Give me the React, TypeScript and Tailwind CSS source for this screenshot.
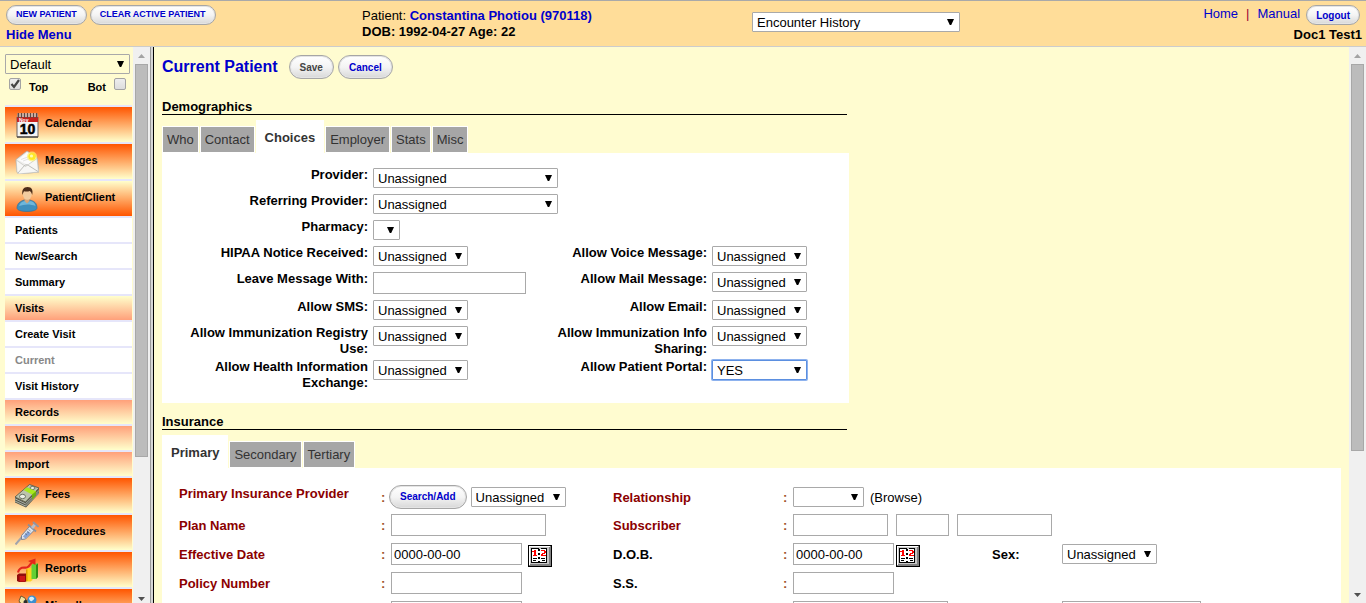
import React from 'react';
import clsx from 'clsx';

interface PickerProps {
  id: string;
  options: string[];
  className?: string;
  label?: string;
}

const Picker: React.FC<PickerProps> = ({ id, options, className, label }) => (
  <span className="relative inline-flex justify-self-start">
    <select
      id={id}
      aria-label={label}
      className={clsx(
        'h-5 appearance-none rounded-[1px] border pl-1 pr-4 pt-px text-[13px] leading-4 text-black outline-none',
        className
      )}
    >
      {options.map((option) => (
        <option key={option}>{option}</option>
      ))}
    </select>
    <svg className="pointer-events-none absolute right-1.5 top-[7px] h-1.5 w-[7px]" viewBox="0 0 7 6">
      <path d="M0 0h7L4.200 6H2.800z" fill="#000" />
    </svg>
  </span>
);

const plain = 'border-[#a9a9a9] bg-white';

const PillButton: React.FC<{ className?: string; children: React.ReactNode }> = ({ className, children }) => (
  <button
    type="button"
    className={clsx(
      'rounded-full border border-[#a6a6a6] bg-linear-to-b/srgb from-white via-[#f4f4f4] to-[#d8d8d8] font-bold whitespace-nowrap shadow-[inset_0_0_0_1px_#e4e4e4]',
      className
    )}
  >
    {children}
  </button>
);

const TextBox: React.FC<{ id: string; className?: string; label?: string; value?: string }> = ({
  id,
  className,
  label,
  value,
}) => (
  <input
    id={id}
    type="text"
    aria-label={label}
    defaultValue={value}
    className={clsx('h-[22px] border border-[#a9a9a9] bg-white px-0.5 text-[13px] leading-4 outline-none', className)}
  />
);

const Checkbox: React.FC<{ id: string; checked?: boolean }> = ({ id, checked }) => (
  <span className="relative inline-flex">
    <input
      id={id}
      type="checkbox"
      defaultChecked={checked}
      className="h-3 w-3 appearance-none rounded-xs border border-[#a3a3a3] bg-linear-to-b/srgb from-[#eeeeee] to-[#dddddd]"
    />
    {checked && (
      <svg className="pointer-events-none absolute left-0 top-0 h-3 w-3" viewBox="0 0 12 12">
        <path d="M2.5 6l2.5 3 5-7" fill="none" stroke="#444" strokeWidth="2.2" />
      </svg>
    )}
  </span>
);

/* menu icons */

const CalendarIcon = () => (
  <svg viewBox="0 0 24 26" className="h-[26px] w-6 shrink-0">
    <path d="M2 5h21v20H2z" fill="#f4f4f4" stroke="#6d6560" />
    <path d="M2 5h21v5H2z" fill="#c9201c" />
    <path d="M2 1.500h21V5H2z" fill="#b98f80" />
    <path d="M3.500 1v5M6.500 1v5M9.500 1v5M12.500 1v5M15.500 1v5M18.500 1v5M21.500 1v5" stroke="#5f4a44" strokeWidth="1.3" />
    <path d="M5 1v4M8 1v4M11 1v4M14 1v4M17 1v4M20 1v4" stroke="#e8dcd6" strokeWidth="0.9" />
    <text x="4" y="9.5" fontSize="5" fontWeight="bold" fill="#fff" fontFamily="Liberation Sans, sans-serif">
      Nov
    </text>
    <text
      x="12.5"
      y="22"
      fontSize="14"
      fontWeight="bold"
      textAnchor="middle"
      fill="#000"
      stroke="#000"
      strokeWidth="0.5"
      fontFamily="Liberation Sans, sans-serif"
    >
      10
    </text>
    <path d="M2 25h21" stroke="#55504c" strokeWidth="1.5" />
  </svg>
);

const MessagesIcon = () => (
  <svg viewBox="0 0 24 24" className="h-6 w-6 shrink-0">
    <path d="M1 9.500L12 1l10 6.500L24 22 3.500 24 2 22z" fill="#ededeb" stroke="#aaaaa6" strokeWidth="0.7" />
    <path d="M3 10L12 2.500 21 8l-8 7z" fill="#fcfcfc" />
    <path d="M6 9.500l8-3M8 11l8-3" stroke="#d0d0d0" strokeWidth="0.6" />
    <path d="M1.200 10l9.300 6.500L22 8.500 23.500 22 3.500 24 2 22z" fill="#f7f7f5" stroke="#bdbdb9" strokeWidth="0.6" />
    <path d="M3 23l6.500-7.500c1.500-1 3-1 4 0L23 21.500" fill="none" stroke="#aeaeaa" strokeWidth="0.8" />
    <circle cx="17" cy="6.500" r="5" fill="#fff36b" opacity="0.7" />
    <circle cx="17" cy="6.500" r="3.600" fill="#ffe926" />
    <circle cx="16.500" cy="6" r="1.600" fill="#fffbb0" />
  </svg>
);

const PatientIcon = () => (
  <svg viewBox="0 0 24 26" className="h-[26px] w-6 shrink-0">
    <path d="M2 22c0-5 4-7 7-8h6c4 1 7 3 7 8 0 2-4 3.500-10 3.500S2 24 2 22z" fill="#3f8fbd" stroke="#2b6f98" strokeWidth="0.6" />
    <path d="M4 20c1-3 3-4.500 6-5l2 2 3-2c3 .5 5 2 5.500 5-5-2-11-2-16.500 0z" fill="#6fb6da" />
    <path d="M9.500 11h5v4L12 17.500 9.500 15z" fill="#d9a577" />
    <ellipse cx="12.300" cy="8.500" rx="4.300" ry="5.200" fill="#f2cba0" />
    <path d="M7.500 9C6.500 4 8.500 1 12.500 1c4.500 0 5.800 3.500 4.700 8-.6-2-1.200-3.300-2.400-4-2 .8-4.300.6-5.800.3C8.200 6.500 8 7.500 7.500 9z" fill="#4c2d1a" />
  </svg>
);

const FeesIcon = () => (
  <svg viewBox="0 0 24 24" className="h-6 w-6 shrink-0">
    <path d="M0 13v5.500l11 5L24 9.500V4.500L10 18z" fill="#55594e" />
    <path d="M0 14.800l10.500 5L24 6.500M0 17l10.500 5L24 8.500" stroke="#c9ccbf" strokeWidth="0.8" fill="none" />
    <path d="M0 13L14.500.5 24 4 10.500 18z" fill="#bcc2ad" stroke="#4c5243" strokeWidth="0.8" />
    <ellipse cx="7.500" cy="12.500" rx="3" ry="2.200" fill="#eceee4" stroke="#5f6756" strokeWidth="0.9" />
    <ellipse cx="17.500" cy="4" rx="2.500" ry="1.500" fill="#eceee4" stroke="#5f6756" strokeWidth="0.9" />
    <path d="M8.500 6L12 3.200l9 4v4L17 15.500v-5z" fill="#a9e81e" />
    <path d="M17 10.500l4-3.300v4.300l-4 4z" fill="#6fae10" />
  </svg>
);

const SyringeIcon = () => (
  <svg viewBox="0 0 24 24" className="h-6 w-6 shrink-0">
    <path d="M.5 23.500L7 16" stroke="#9fa3ad" strokeWidth="2" />
    <path d="M6.500 14.500L15 5l4.500 4-9 9-4 .5z" fill="#dfe4ec" stroke="#737c8c" strokeWidth="0.9" />
    <path d="M8 15.500L13 10l3 2.500-5.500 5z" fill="#86a3d6" />
    <path d="M10 12.500l2 1.500M12 10.500l2 1.500M13.500 8.500l2 1.500" stroke="#5f6878" strokeWidth="0.7" />
    <path d="M13 3.500l8 7" stroke="#8a909c" strokeWidth="1.800" />
    <path d="M17 7l3-3.500" stroke="#b9bdc7" strokeWidth="3" />
    <path d="M18 1l5.500 4.800" stroke="#8f95a2" strokeWidth="2" />
  </svg>
);

const ReportsIcon = () => (
  <svg viewBox="0 0 24 24" className="h-6 w-6 shrink-0">
    <path d="M2 17l2-1.500h8v7.500l-2 1H4l-2-1z" fill="#8f0d0d" />
    <path d="M4.500 18H10v5.500H4.500z" fill="#d01818" />
    <path d="M11 11.500l2-1.500h4.500v12l-2 1.500H11z" fill="#ffd21c" />
    <path d="M11 11.500h1.500V23H11z" fill="#e0a000" />
    <path d="M16.500 7l2-1.500H23V19l-2 2h-4.500z" fill="#63cf35" />
    <path d="M21 7l2-1.500V19l-2 2z" fill="#2f8a12" />
    <path d="M3 14.500c1-4 4-5 6-5 2.500.5 3.500 0 4.500-1s2-2.500 3.500-4" fill="none" stroke="#e3261b" strokeWidth="2.200" />
    <path d="M13 3L20.500.5 20.500 7z" fill="#e3261b" />
  </svg>
);

const MiscIcon = () => (
  <svg viewBox="0 0 24 24" className="h-6 w-6 shrink-0">
    <path d="M2 9l10-4 11 4v11l-11 4-10-4z" fill="#d7a24a" stroke="#7b5518" strokeWidth="0.8" />
    <circle cx="17" cy="5" r="4.500" fill="#3b8fd0" />
    <path d="M14 3c2-2 4-1 5 0s-1 2-2 3-3-1-3-3z" fill="#d8ecf8" />
    <path d="M4 6l2-5 4 2 2 6-5 1z" fill="#f4e3a1" stroke="#4e4422" strokeWidth="0.8" />
    <circle cx="10.500" cy="7" r="2" fill="#2c2c2c" />
    <path d="M2 9l10 4 11-4" stroke="#7b5518" fill="none" />
  </svg>
);

const BookIcon = () => (
  <svg viewBox="0 0 24 22" className="h-[22px] w-6" shapeRendering="crispEdges">
    <path d="M0 0h24v22H0z" fill="#000" />
    <path d="M1 1h22v20H1z" fill="#808080" />
    <path d="M1 1h21v1H2v18H1z" fill="#fff" />
    <path d="M2 2h19v17H2z" fill="#c8c8c8" />
    <path d="M3 3h8v1h2V3h6v15H3z" fill="#000" />
    <path d="M4 4h6v13H4zM12 4h6v13h-6z" fill="#fff" />
    <path d="M10 6h2v2h-2zM10 10h2v2h-2zM10 14h2v2h-2z" fill="#fff" />
    <path d="M6 5h2v5H6zM4 6h2v1H4zM5 10h4v1H5z" fill="#f00" />
    <path d="M13 5h4v1h-4zM16 6h2v2h-2zM14 8h3v1h-3zM13 9h2v1h-2zM13 10h5v1h-5z" fill="#f00" />
    <path d="M5 13h4v1H5zM5 15h3v1H5zM13 13h4v1h-4zM14 15h3v1h-3z" fill="#000" />
  </svg>
);

const Scrollbar: React.FC<{ thumb: string; rest: string; className?: string }> = ({ thumb, rest, className }) => (
  <div aria-hidden="true" className={clsx('flex w-[17px] shrink-0 flex-col items-center bg-[#f0f0f0]', className)}>
    <div className="flex h-[17px] shrink-0 items-center">
      <svg className="h-1 w-[7px]" viewBox="0 0 7 4">
        <path d="M0 4L3.500 0 7 4z" fill="#a3a3a3" />
      </svg>
    </div>
    <div className={clsx('w-[13px] border border-[#a8a8a8] bg-[#bcbcbc]', thumb)} />
    <div className={rest} />
    <div className="flex h-[17px] shrink-0 items-center">
      <svg className="h-1 w-[7px]" viewBox="0 0 7 4">
        <path d="M0 0L3.500 4 7 0z" fill="#505050" />
      </svg>
    </div>
  </div>
);

type Tone = 'main' | 'mainOpen' | 'item' | 'muted' | 'group' | 'groupOpen';

interface MenuEntry {
  text: string;
  tone: Tone;
  icon?: React.ReactNode;
}

const menu: MenuEntry[] = [
  { text: 'Calendar', tone: 'main', icon: <CalendarIcon /> },
  { text: 'Messages', tone: 'main', icon: <MessagesIcon /> },
  { text: 'Patient/Client', tone: 'mainOpen', icon: <PatientIcon /> },
  { text: 'Patients', tone: 'item' },
  { text: 'New/Search', tone: 'item' },
  { text: 'Summary', tone: 'item' },
  { text: 'Visits', tone: 'groupOpen' },
  { text: 'Create Visit', tone: 'item' },
  { text: 'Current', tone: 'muted' },
  { text: 'Visit History', tone: 'item' },
  { text: 'Records', tone: 'group' },
  { text: 'Visit Forms', tone: 'group' },
  { text: 'Import', tone: 'group' },
  { text: 'Fees', tone: 'main', icon: <FeesIcon /> },
  { text: 'Procedures', tone: 'main', icon: <SyringeIcon /> },
  { text: 'Reports', tone: 'main', icon: <ReportsIcon /> },
  { text: 'Miscellaneous', tone: 'main', icon: <MiscIcon /> },
];

const tones: Record<Tone, string> = {
  main: 'h-[37px] bg-linear-to-b/srgb from-[#ff5500] to-[#ffffcc]',
  mainOpen: 'h-[37px] bg-linear-to-t/srgb from-[#ff5500] to-[#ffffcc]',
  item: 'h-[26px] bg-white',
  muted: 'h-[26px] bg-white text-[#888888]',
  group: 'h-[26px] bg-linear-to-b/srgb from-[#ffa07a] to-[#ffffcc]',
  groupOpen: 'h-[26px] bg-linear-to-t/srgb from-[#ffa07a] to-[#ffffcc]',
};

const Sidebar = () => (
  <aside className="flex shrink-0 border-r border-black">
    <div className="w-[133px] overflow-hidden pl-[5px] pr-px pt-[7px]">
      <Picker id="layout" label="Layout" options={['Default']} className="w-[125px] border-[#a9a9a9] bg-[#fffcd0]" />
      <div className="mb-[11px] mt-1 flex h-4 w-[125px] items-start justify-between pl-1 pr-1 text-[11px] font-bold">
        <span className="flex items-start gap-2">
          <Checkbox id="top" checked />
          <label htmlFor="top" className="leading-[18px]">
            Top
          </label>
        </span>
        <span className="flex items-start gap-2">
          <label htmlFor="bot" className="leading-[18px]">
            Bot
          </label>
          <Checkbox id="bot" />
        </span>
      </div>
      <nav className="border-t-2 border-[#e6e6fa] text-[11px] font-bold">
        {menu.map(({ text, tone, icon }) => (
          <a
            key={text}
            href="#"
            className={clsx(
              'flex items-center gap-1.5 overflow-hidden whitespace-nowrap border-b-2 border-[#e6e6fa] pl-2.5',
              tones[tone]
            )}
          >
            {icon}
            <span className={clsx(icon && 'pb-0.5')}>{text}</span>
          </a>
        ))}
      </nav>
    </div>
    <Scrollbar thumb="flex-[392]" rest="flex-[134]" className="-mb-1" />
    <div className="w-[3px] border-l border-[#9a9a9a] bg-[#d6d6d6]" />
  </aside>
);

const Header = () => (
  <header className="grid h-[47px] shrink-0 grid-cols-[356px_390px_1fr_auto] border-b border-t border-b-[#cccccc] border-t-[#a9a9a9] bg-[#ffdd99] pl-1.5 pr-1">
    <div className="pt-1">
      <div className="flex gap-[3px] text-[9px] text-[#0000cc]">
        <PillButton className="h-5 px-[9px]">NEW PATIENT</PillButton>
        <PillButton className="h-5 px-[9px]">CLEAR ACTIVE PATIENT</PillButton>
      </div>
      <a href="#" className="mt-0.5 block font-bold leading-4 text-[#0000cc]">
        Hide Menu
      </a>
    </div>
    <div className="pt-[7px] leading-4">
      <p>
        Patient:{' '}
        <a href="#" className="font-bold text-[#0000cc]">
          Constantina Photiou (970118)
        </a>
      </p>
      <p className="font-bold">DOB: 1992-04-27 Age: 22</p>
    </div>
    <div className="pt-[11px]">
      <Picker id="history" label="Encounter history" options={['Encounter History']} className={clsx('w-52', plain)} />
    </div>
    <div className="pt-1 text-right">
      <div className="flex items-center pr-0.5 text-[#0000cc]">
        <a href="#" className="pb-0.5 leading-4">
          Home
        </a>
        <span className="px-2 pb-0.5 leading-4 text-[#990033]">|</span>
        <a href="#" className="mr-1.5 pb-0.5 leading-4">
          Manual
        </a>
        <PillButton className="h-5 px-[9px] text-[10px]">Logout</PillButton>
      </div>
      <p className="mt-0.5 font-bold leading-4">Doc1 Test1</p>
    </div>
  </header>
);

const Tabs: React.FC<{ names: string[]; active: string }> = ({ names, active }) => (
  <div role="tablist" className="mt-[5px] flex items-end gap-px">
    {names.map((name) => (
      <button
        key={name}
        type="button"
        role="tab"
        aria-selected={name === active}
        className={
          name === active
            ? 'h-[33px] bg-white px-[9px] pt-0.5 font-bold text-[#333333]'
            : 'h-[27px] border border-white bg-[#a6a6a6] px-1 text-[#333333]'
        }
      >
        {name}
      </button>
    ))}
  </div>
);

const SectionTitle: React.FC<{ children: React.ReactNode }> = ({ children }) => (
  <h2 className="h-[17px] max-w-[685px] border-b border-black font-bold leading-[18px]">{children}</h2>
);

const FieldLabel: React.FC<{ htmlFor: string; children: React.ReactNode }> = ({ htmlFor, children }) => (
  <label htmlFor={htmlFor} className="pb-px pl-3 pt-px text-right font-bold leading-4">
    {children}
  </label>
);

const choices: [string, string][] = [
  ['HIPAA Notice Received:', 'Allow Voice Message:'],
  ['Leave Message With:', 'Allow Mail Message:'],
  ['Allow SMS:', 'Allow Email:'],
  ['Allow Immunization Registry Use:', 'Allow Immunization Info Sharing:'],
  ['Allow Health Information Exchange:', 'Allow Patient Portal:'],
];

const cell = 'flex items-start pt-0.5 pb-1';

const Choices = () => (
  <div className="grid max-w-[687px] grid-cols-[206px_160px_169px_1fr] gap-x-[5px] bg-white pb-[11px] pt-[13px]">
    <FieldLabel htmlFor="provider">Provider:</FieldLabel>
    <div className={clsx(cell, 'col-span-3')}>
      <Picker id="provider" options={['Unassigned']} className={clsx('w-[185px]', plain)} />
    </div>
    <FieldLabel htmlFor="referring">Referring Provider:</FieldLabel>
    <div className={clsx(cell, 'col-span-3')}>
      <Picker id="referring" options={['Unassigned']} className={clsx('w-[185px]', plain)} />
    </div>
    <FieldLabel htmlFor="pharmacy">Pharmacy:</FieldLabel>
    <div className={clsx(cell, 'col-span-3')}>
      <Picker id="pharmacy" options={['']} className={clsx('w-[27px]', plain)} />
    </div>
    {choices.map(([left, right], i) => (
      <React.Fragment key={left}>
        <FieldLabel htmlFor={`left-${i}`}>{left}</FieldLabel>
        <div className={cell}>
          {left === 'Leave Message With:' ? (
            <TextBox id={`left-${i}`} className="w-[153px]" />
          ) : (
            <Picker id={`left-${i}`} options={['Unassigned']} className={clsx('w-[95px]', plain)} />
          )}
        </div>
        <FieldLabel htmlFor={`right-${i}`}>{right}</FieldLabel>
        <div className={cell}>
          {right === 'Allow Patient Portal:' ? (
            <Picker
              id={`right-${i}`}
              options={['YES', 'NO', 'Unassigned']}
              className="w-[95px] border-[#5b8fe0] bg-white ring-1 ring-[#8db2ee]"
            />
          ) : (
            <Picker id={`right-${i}`} options={['Unassigned']} className={clsx('w-[95px]', plain)} />
          )}
        </div>
      </React.Fragment>
    ))}
  </div>
);

const Colon = () => <span className="pt-0.5 font-bold text-[#a0522d]">:</span>;

const DateButton = () => (
  <button type="button" aria-label="Choose a date" className="pt-1">
    <BookIcon />
  </button>
);

const dark = 'pt-0.5 font-bold';
const red = 'pt-0.5 font-bold text-[#8b0000]';

const Insurance = () => (
  <div className="grid auto-rows-[28px] grid-cols-[202px_10px_222px_170px_10px_199px_70px_1fr] grid-rows-[26px] items-center gap-y-px bg-white pl-[17px] pt-4 leading-4">
    <label htmlFor="insurer" className={clsx(red, 'self-start')}>
      Primary Insurance Provider
    </label>
    <Colon />
    <div className="-ml-0.5 flex items-center gap-1">
      <PillButton className="h-6 px-2.5 text-[10px] text-[#0000cc]">Search/Add</PillButton>
      <Picker id="insurer" options={['Unassigned']} className={clsx('w-[95px]', plain)} />
    </div>
    <label htmlFor="relationship" className={red}>
      Relationship
    </label>
    <Colon />
    <div className="col-span-3 flex items-center gap-1.5">
      <Picker id="relationship" options={['']} className={clsx('w-[71px]', plain)} />
      <a href="#" className="pt-0.5">
        (Browse)
      </a>
    </div>

    <label htmlFor="plan" className={red}>
      Plan Name
    </label>
    <Colon />
    <TextBox id="plan" className="w-[155px]" />
    <label htmlFor="subscriber" className={red}>
      Subscriber
    </label>
    <Colon />
    <div className="col-span-3 flex gap-2">
      <TextBox id="subscriber" className="w-[95px]" />
      <TextBox id="subscriber-middle" label="Subscriber middle name" className="w-[53px]" />
      <TextBox id="subscriber-last" label="Subscriber last name" className="w-[95px]" />
    </div>

    <label htmlFor="effective" className={red}>
      Effective Date
    </label>
    <Colon />
    <div className="flex items-center gap-1.5">
      <TextBox id="effective" value="0000-00-00" className="w-[131px]" />
      <DateButton />
    </div>
    <label htmlFor="dob" className={dark}>
      D.O.B.
    </label>
    <Colon />
    <div className="flex items-center gap-0.5">
      <TextBox id="dob" value="0000-00-00" className="w-[101px]" />
      <DateButton />
    </div>
    <label htmlFor="sex" className={dark}>
      Sex:
    </label>
    <Picker id="sex" options={['Unassigned']} className={clsx('w-[95px]', plain)} />

    <label htmlFor="policy" className={red}>
      Policy Number
    </label>
    <Colon />
    <TextBox id="policy" className="w-[131px]" />
    <label htmlFor="ss" className={dark}>
      S.S.
    </label>
    <Colon />
    <TextBox id="ss" className="col-span-3 w-[101px]" />

    <TextBox id="group" label="Group number" className="col-start-3 w-[131px]" />
    <TextBox id="address" label="Subscriber address" className="col-start-6 w-[155px]" />
    <TextBox id="city" label="City" className="col-start-8 w-[139px]" />
  </div>
);

export default function App() {
  return (
    <div className="flex h-screen flex-col overflow-hidden bg-[#fffcd0] font-['Liberation_Sans',Arial,sans-serif] text-[13px] text-black">
      <Header />
      <div className="flex min-h-0 flex-1">
        <Sidebar />
        <main className="min-w-0 flex-1 overflow-hidden px-2 pt-2">
          <div className="mb-[19px] flex h-6 items-center">
            <h1 className="mr-[11px] text-base font-bold text-[#0000cc]">Current Patient</h1>
            <PillButton className="mr-1 h-6 px-2.5 text-[10px] text-[#444444]">Save</PillButton>
            <PillButton className="h-6 px-2.5 text-[10px] text-[#0000cc]">Cancel</PillButton>
          </div>
          <SectionTitle>Demographics</SectionTitle>
          <Tabs names={['Who', 'Contact', 'Choices', 'Employer', 'Stats', 'Misc']} active="Choices" />
          <Choices />
          <div className="h-2.5" />
          <SectionTitle>Insurance</SectionTitle>
          <Tabs names={['Primary', 'Secondary', 'Tertiary']} active="Primary" />
          <Insurance />
        </main>
        <Scrollbar thumb="flex-[386]" rest="flex-[136]" />
      </div>
    </div>
  );
}
